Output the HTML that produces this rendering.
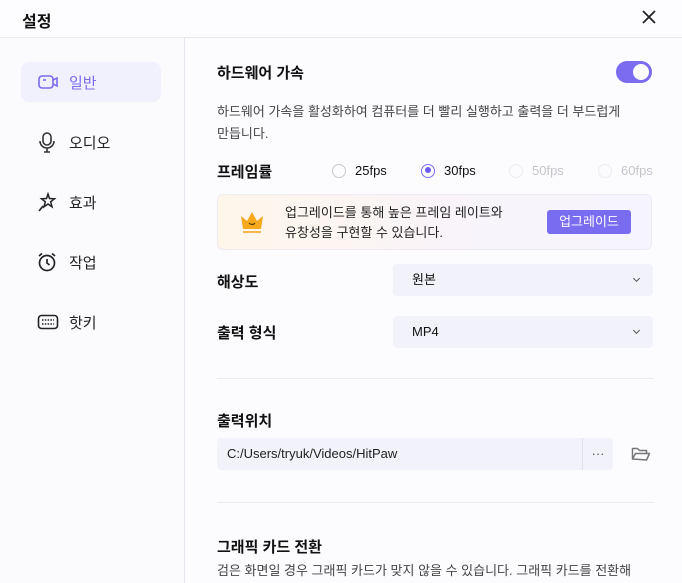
<!DOCTYPE html>
<html><head><meta charset="utf-8"><style>
*{margin:0;padding:0;box-sizing:border-box}
body{width:682px;height:583px;overflow:hidden;background:#fcfcff;font-family:"Liberation Sans","Noto Sans CJK KR",sans-serif;color:#111;position:relative}
.abs{position:absolute}
.top{left:0;top:0;width:682px;height:38px;border-bottom:1px solid #e8e8ef;background:#fdfdff}
.side{left:0;top:38px;width:185px;height:545px;border-right:1px solid #e6e6ee;background:#fbfbfe}
.item{position:absolute;left:21px;width:140px;height:40px;display:flex;align-items:center;font-size:15px;color:#222}
.item svg{position:absolute;left:16px}
.item span{position:absolute;left:48px}
.h{font-size:15px;font-weight:bold}
.p{font-size:13px;color:#444;line-height:22px}
.radio{display:flex;align-items:center;font-size:13px}
.rc{width:14px;height:14px;border-radius:50%;border:1.5px solid #c8c8d0;margin-right:9px;position:relative}
.sel{left:393px;width:260px;height:32px;background:#f2f2fb;border-radius:4px;font-size:13px;padding-left:19px;line-height:32px}
.sel:after{content:"";position:absolute;right:14px;top:12px;width:4px;height:4px;border-right:1.5px solid #555;border-bottom:1.5px solid #555;transform:rotate(45deg)}
.hr{left:217px;width:437px;height:1px;background:#ebebf0}
</style></head><body>
<div class="abs top"></div>
<div class="abs h" style="left:22px;top:8px;font-size:16px">설정</div>
<svg class="abs" style="left:642px;top:10px" width="14" height="14" viewBox="0 0 14 14"><path d="M1 1L13 13M13 1L1 13" stroke="#222" stroke-width="1.8"/></svg>
<div class="abs side"></div>
<div class="item" style="top:62px;background:#f1f0fd;border-radius:8px;color:#7a6cf0">
<svg width="22" height="18" viewBox="0 0 22 18"><rect x="2" y="3" width="14" height="12" rx="3" fill="none" stroke="#7a6cf0" stroke-width="1.6"/><path d="M16 7l4-2v8l-4-2" fill="none" stroke="#7a6cf0" stroke-width="1.6"/><path d="M6 7h3" stroke="#7a6cf0" stroke-width="1.6"/></svg><span>일반</span></div>
<div class="item" style="top:122px"><svg width="20" height="22" viewBox="0 0 20 22"><rect x="6" y="2" width="8" height="12" rx="4" fill="none" stroke="#333" stroke-width="1.6"/><path d="M3 10a7 7 0 0 0 14 0M10 17v4M7 21h6" fill="none" stroke="#333" stroke-width="1.6"/></svg><span>오디오</span></div>
<div class="item" style="top:182px"><svg width="20" height="20" viewBox="0 0 20 20"><path d="M11 2l1.5 4.5 5 .3-3.8 3 1.3 5-4-2.8-4 2.8 1.3-5-3.8-3 5-.3z" fill="none" stroke="#222" stroke-width="1.5"/><path d="M6 14l-4 5" stroke="#222" stroke-width="1.6"/></svg><span>효과</span></div>
<div class="item" style="top:242px"><svg width="20" height="20" viewBox="0 0 20 20"><circle cx="10" cy="11" r="7.5" fill="none" stroke="#222" stroke-width="1.7"/><path d="M10 7v4l2.5 2M2 4l3-2.5M18 4l-3-2.5" fill="none" stroke="#222" stroke-width="1.7"/></svg><span>작업</span></div>
<div class="item" style="top:302px"><svg width="22" height="18" viewBox="0 0 22 18"><rect x="1.5" y="2.5" width="19" height="13" rx="3" fill="none" stroke="#222" stroke-width="1.6"/><path d="M5 7h12M5 11h12" stroke="#222" stroke-width="1.4" stroke-dasharray="1.5 1.3"/></svg><span>핫키</span></div>

<div class="abs h" style="left:217px;top:62px">하드웨어 가속</div>
<div class="abs" style="left:616px;top:61px;width:36px;height:22px;border-radius:11px;background:#7b6cf0"><div style="position:absolute;right:3px;top:3px;width:16px;height:16px;border-radius:50%;background:#fff"></div></div>
<div class="abs p" style="left:217px;top:101px;width:420px">하드웨어 가속을 활성화하여 컴퓨터를 더 빨리 실행하고 출력을 더 부드럽게<br>만듭니다.</div>
<div class="abs h" style="left:217px;top:161px">프레임률</div>
<div class="abs radio" style="left:332px;top:163px"><div class="rc"></div>25fps</div>
<div class="abs radio" style="left:421px;top:163px"><div class="rc" style="border-color:#7b6cf0"><div style="position:absolute;left:2.5px;top:2.5px;width:6px;height:6px;border-radius:50%;background:#6a5af0"></div></div>30fps</div>
<div class="abs radio" style="left:509px;top:163px;color:#c4c4cc"><div class="rc" style="border-color:#ececf0"></div>50fps</div>
<div class="abs radio" style="left:598px;top:163px;color:#c4c4cc"><div class="rc" style="border-color:#ececf0"></div>60fps</div>
<div class="abs" style="left:217px;top:194px;width:435px;height:56px;border:1px solid #efe9f5;border-radius:6px;background:linear-gradient(90deg,#fff6ea,#f8f4fb 60%,#f6f4fd)"></div>
<svg class="abs" style="left:238px;top:208px" width="28" height="28" viewBox="0 0 28 28"><path d="M3 8l6 5 5-9 5 9 6-5-2 13H5z" fill="#f6a91d"/><rect x="5" y="23" width="18" height="2" fill="#f6b84a"/><path d="M11 15q3 3 6 0" stroke="#5a3a00" stroke-width="1.2" fill="none"/></svg>
<div class="abs" style="left:285px;top:203px;font-size:13px;line-height:20px;color:#222">업그레이드를 통해 높은 프레임 레이트와<br>유창성을 구현할 수 있습니다.</div>
<div class="abs" style="left:547px;top:210px;width:84px;height:24px;border-radius:3px;background:#7a6cf0;color:#fff;font-size:13px;text-align:center;line-height:24px">업그레이드</div>
<div class="abs h" style="left:217px;top:271px">해상도</div>
<div class="abs sel" style="top:264px">원본</div>
<div class="abs h" style="left:217px;top:322px">출력 형식</div>
<div class="abs sel" style="top:316px">MP4</div>
<div class="abs hr" style="top:378px"></div>
<div class="abs h" style="left:217px;top:410px">출력위치</div>
<div class="abs" style="left:217px;top:438px;width:396px;height:32px;background:#f2f2fb;border-radius:4px;font-size:13px;line-height:32px;padding-left:10px;color:#222">C:/Users/tryuk/Videos/HitPaw<div style="position:absolute;left:365px;top:0;width:1px;height:32px;background:#e0e0ea"></div><div style="position:absolute;left:366px;width:30px;text-align:center;top:0;color:#555">···</div></div>
<svg class="abs" style="left:631px;top:446px" width="20" height="16" viewBox="0 0 20 16"><path d="M1.5 13V2.5h5l2 2h7v3M1.5 13l3-5.5h14l-3 6.5z" fill="none" stroke="#777" stroke-width="1.5" stroke-linejoin="round"/></svg>
<div class="abs hr" style="top:502px"></div>
<div class="abs h" style="left:217px;top:536px">그래픽 카드 전환</div>
<div class="abs p" style="left:217px;top:560px;white-space:nowrap">검은 화면일 경우 그래픽 카드가 맞지 않을 수 있습니다. 그래픽 카드를 전환해</div>
</body></html>
